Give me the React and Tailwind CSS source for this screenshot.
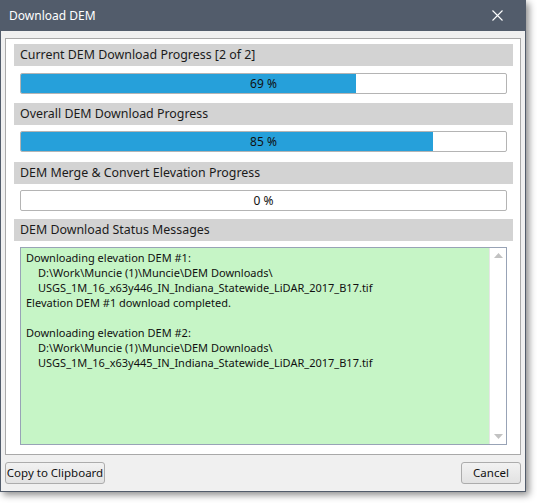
const FONT = { fontFamily: '"Noto Sans", "Open Sans", sans-serif' };

function SectionHeader({ children, className = '' }) {
  return (
    <div className={`flex h-[22px] items-center bg-[#d3d3d3] pl-[6px] text-[12.4px] text-[#1b1b1b] ${className}`}>
      {children}
    </div>
  );
}

function ProgressBar({ value, className = '' }) {
  return (
    <div className={`relative mx-[6px] h-[21px] overflow-hidden rounded-[2px] border border-[#b4b4b4] bg-white ${className}`}>
      <div className="h-full bg-[#26a0da]" style={{ width: `${value}%` }} />
      <div className="absolute inset-0 flex items-center justify-center text-[12px] text-[#111]">
        {value} %
      </div>
    </div>
  );
}

const messages = [
  { text: 'Downloading elevation DEM #1:' },
  { text: 'D:\\Work\\Muncie (1)\\Muncie\\DEM Downloads\\', indent: true },
  { text: 'USGS_1M_16_x63y446_IN_Indiana_Statewide_LiDAR_2017_B17.tif', indent: true },
  { text: 'Elevation DEM #1 download completed.' },
  { text: '' },
  { text: 'Downloading elevation DEM #2:' },
  { text: 'D:\\Work\\Muncie (1)\\Muncie\\DEM Downloads\\', indent: true },
  { text: 'USGS_1M_16_x63y445_IN_Indiana_Statewide_LiDAR_2017_B17.tif', indent: true },
];

export default function App() {
  return (
    <div className="h-[504px] w-[537px] bg-white" style={FONT}>
      <div className="flex h-[492px] w-[526px] flex-col border border-t-0 border-[#525c6b] bg-[#f0f0f0] shadow-[3px_3px_7px_rgba(0,0,0,0.45)]">
        {/* title bar */}
        <div className="-mx-px flex h-[31px] shrink-0 items-center justify-between bg-[#525c6b] pl-[9px] pr-[23px] text-[12px] text-white">
          <span>Download DEM</span>
          <svg width="11" height="11" viewBox="0 0 11 11" className="shrink-0">
            <path d="M0.5 0.5 L10.5 10.5 M10.5 0.5 L0.5 10.5" stroke="white" strokeWidth="1.1" fill="none" />
          </svg>
        </div>

        {/* content panel */}
        <div className="ml-[4px] mr-[4px] mt-[7px] flex h-[417px] flex-col border border-[#a9a9a9] bg-white pl-[8px] pr-[7px] pt-[5px]">
          <SectionHeader>Current DEM Download Progress [2 of 2]</SectionHeader>
          <ProgressBar value={69} className="mt-[7px]" />

          <SectionHeader className="mt-[9px]">Overall DEM Download Progress</SectionHeader>
          <ProgressBar value={85} className="mt-[6px]" />

          <SectionHeader className="mt-[10px]">DEM Merge &amp; Convert Elevation Progress</SectionHeader>
          <ProgressBar value={0} className="mt-[6px]" />

          <SectionHeader className="mt-[8px]">DEM Download Status Messages</SectionHeader>
          <div className="mx-[6px] mt-[6px] flex h-[198px] border border-[#98a3b6] bg-[#c6f5c6]">
            <div className="flex-1 pl-[5px] pt-[2px] text-[11px] leading-[15px] text-[#111]">
              {messages.map((m, i) => (
                <div key={i} className={`h-[15px] whitespace-nowrap ${m.indent ? 'pl-[12px]' : ''}`}>
                  {m.text}
                </div>
              ))}
            </div>
            <div className="flex w-[17px] flex-col items-center justify-between border-l border-[#e6e6e6] bg-white py-[5px]">
              <svg width="9" height="5" viewBox="0 0 9 5">
                <path d="M0 5 L4.5 0 L9 5 Z" fill="#c2c2c2" />
              </svg>
              <svg width="9" height="5" viewBox="0 0 9 5">
                <path d="M0 0 L4.5 5 L9 0 Z" fill="#c2c2c2" />
              </svg>
            </div>
          </div>
        </div>

        {/* buttons */}
        <div className="mt-[7px] flex justify-between pl-[4px] pr-[4px]">
          <button className="h-[22px] w-[100px] whitespace-nowrap rounded-[3px] border border-[#acacac] bg-gradient-to-b from-[#f2f2f2] to-[#e2e2e2] px-0 text-[11.5px] text-[#111]">
            Copy to Clipboard
          </button>
          <button className="h-[22px] w-[60px] whitespace-nowrap rounded-[3px] border border-[#acacac] bg-gradient-to-b from-[#f2f2f2] to-[#e2e2e2] px-0 text-[11.5px] text-[#111]">
            Cancel
          </button>
        </div>
      </div>
    </div>
  );
}
